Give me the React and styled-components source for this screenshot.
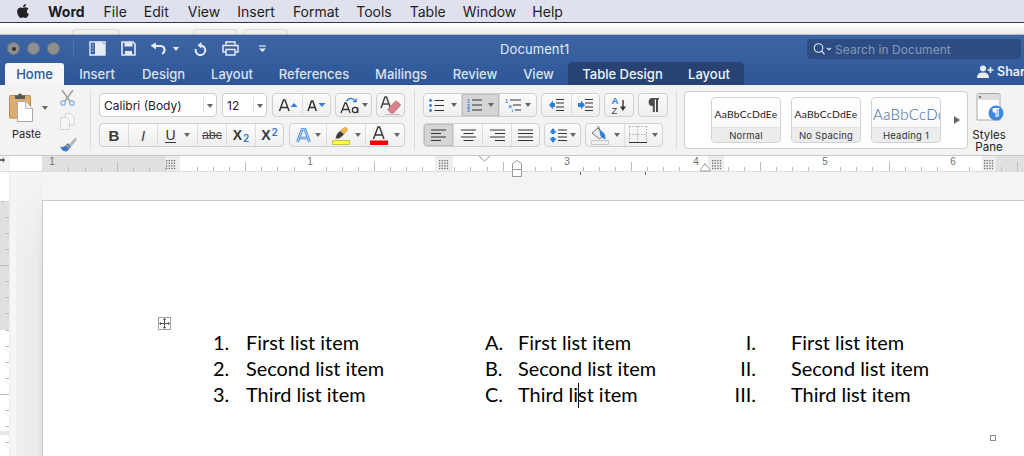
import React from "react";
import styled, { createGlobalStyle, css } from "styled-components";
import { FaApple } from "react-icons/fa";

const Global = createGlobalStyle`
  html, body { margin: 0; padding: 0; background: #f3f3f3; overflow: hidden; }
  #root { width: 1024px; height: 456px; overflow: hidden; }
  * { box-sizing: border-box; }
`;
const ui = `"Inter", "Liberation Sans", sans-serif`;

const Screen = styled.div`
  width: 1024px; height: 456px; display: flex; flex-direction: column; overflow: hidden;
  font-family: ${ui}; color: #222;
`;
const MenuBar = styled.div`
  height: 23px; flex: none; display: flex; align-items: center; padding: 0 0 0 15px;
  background: #dfe2ed; border-bottom: 1px solid #2f3650; font-size: 14px; color: #1d1d1f; white-space: nowrap;
`;
const MenuItem = styled.span`
  margin-left: ${(p) => p.$gap}px; font-weight: ${(p) => (p.$bold ? 700 : 400)};
`;
const BehindStrip = styled.div`
  height: 12px; flex: none; display: flex; align-items: flex-end; padding-left: 72px;
  background: linear-gradient(#ffffff, #ebebeb); border-bottom: 1px solid #b9bdc6;
`;
const GhostButton = styled.div`
  width: ${(p) => p.$w}px; height: 5px; margin-right: ${(p) => p.$mr || 0}px;
  border: 1px solid #d8d8d8; border-bottom: 0; border-radius: 4px 4px 0 0;
`;
const TitleBar = styled.div`
  height: 50px; flex: none; display: flex; flex-direction: column;
  background: linear-gradient(#3e65a3, #2e5597);
`;
const TitleRow = styled.div`
  height: 27px; flex: none; display: flex; align-items: center; padding-left: 7px; position: relative;
`;
const Light = styled.span`
  width: 13px; height: 13px; border-radius: 50%; margin-right: 7px; flex: none;
  background: #8f8f8f; border: 1px solid #6d7787; display: flex; align-items: center; justify-content: center;
  &::after { content: ""; width: 4px; height: 4px; border-radius: 50%; background: ${(p) => (p.$dot ? "#333" : "transparent")}; }
`;
const TitleSep = styled.span`
  width: 1px; height: 16px; background: #4f74ae; margin: 0 15px 0 6px; flex: none;
`;
const QuickIcon = styled.span`
  display: flex; flex: none; margin-right: ${(p) => p.$mr}px;
`;
const QuickCaret = styled.span`
  width: 0; height: 0; flex: none; border-left: 3px solid transparent; border-right: 3px solid transparent;
  border-top: 4px solid #e6ebf4;
`;
const DocTitle = styled.div`
  position: absolute; left: 500px; top: 6px; font-size: 13px; color: #e6ebf4; letter-spacing: .1px;
`;
const Search = styled.div`
  position: absolute; left: 807px; top: 4px; width: 214px; height: 20px; border-radius: 4px;
  background: #2d4d82; display: flex; align-items: center; padding-left: 6px; gap: 2px;
  font-size: 12px; color: #8599bd; letter-spacing: .05px;
`;
const TabRow = styled.div`
  height: 23px; flex: none; display: flex; align-items: flex-end; position: relative; padding-left: 5px;
`;
const Tab = styled.div`
  height: ${(p) => (p.$active ? 22 : 23)}px; flex: none; display: flex; align-items: center; justify-content: center;
  width: ${(p) => p.$w}px; font-size: 13px; font-weight: 500; color: #dbe3ef;
  white-space: nowrap;
  ${(p) => p.$active && css`background: #f6f6f6; color: #2b579a; border-radius: 3px 3px 0 0;`}
  ${(p) => p.$context && css`color: #f0f3f8;`}
`;
const ContextTabs = styled.div`
  display: flex; flex: none; background: #284373; border-radius: 5px 5px 0 0; padding-right: 3px;
`;
const Share = styled.div`
  position: absolute; left: 977px; top: 2px; display: flex; align-items: center; gap: 3px;
  font-size: 12.5px; font-weight: 600; color: #e8edf5; white-space: nowrap;
`;
const Ribbon = styled.div`
  height: 70px; flex: none; display: flex; background: #f3f3f3; position: relative;
`;
const ClipboardGroup = styled.div`
  width: 91px; flex: none; height: 60px; margin-top: 5px; border-right: 1px solid #dcdcdc;
  display: flex; position: relative;
`;
const PasteCol = styled.div`
  width: 58px; flex: none; display: flex; flex-direction: column; padding: 2px 0 0 9px; font-size: 11px; color: #222;
`;
const PasteLabel = styled.span`
  margin: 5px 0 0 3px;
`;
const PasteCaret = styled.span`
  position: absolute; left: 42px; top: 16px; width: 0; height: 0;
  border-left: 3px solid transparent; border-right: 3px solid transparent; border-top: 4px solid #666;
`;
const ClipTools = styled.div`
  display: flex; flex-direction: column; gap: 7px; padding-left: 2px;
`;
const FontGroup = styled.div`
  width: 324px; flex: none; height: 60px; margin-top: 5px; padding: 3px 0 0 8px; border-right: 1px solid #dcdcdc;
  display: flex; flex-direction: column; gap: 6px;
`;
const ParaGroup = styled(FontGroup)`
  width: 262px;
`;
const Row = styled.div`
  display: flex; height: 24px; gap: ${(p) => p.$gap ?? 4}px;
`;
const Select = styled.div`
  width: ${(p) => p.$w}px; height: 24px; flex: none; background: #fff; border: 1px solid #cfcfcf; border-radius: 4px;
  display: flex; align-items: center; padding-left: 4px; font-size: 12px; color: #222; position: relative;
  margin-right: 1px;
`;
const SelectCaret = styled.span`
  position: absolute; right: 0; top: 3px; bottom: 3px; width: 13px; border-left: 1px solid #e2e2e2;
  &::after { content: ""; position: absolute; left: 3px; top: 7px; width: 0; height: 0;
    border-left: 3px solid transparent; border-right: 3px solid transparent; border-top: 4px solid #666; }
`;
const Group = styled.div`
  display: flex; flex: none; height: 24px; border: 1px solid #d0d0d0; border-radius: 4px;
  background: linear-gradient(#fbfbfb, #efefef); overflow: hidden;
`;
const Cell = styled.div`
  width: ${(p) => p.$w}px; flex: none; height: 100%; display: flex; align-items: center; justify-content: center;
  position: relative; font-size: 13px; color: #333;
  & + & { border-left: 1px solid #dcdcdc; }
  ${(p) => p.$on && css`background: #d5d5d5; box-shadow: inset 0 0 0 1px #bdbdbd;`}
`;
const Caret = styled.span`
  width: 0; height: 0; flex: none; margin-left: ${(p) => p.$ml ?? 4}px;
  border-left: 3px solid transparent; border-right: 3px solid transparent; border-top: 4px solid #666;
`;
const Sub = styled.span`
  font-size: 10px; color: #2f74c9; font-weight: 600; margin-left: 1px; align-self: ${(p) => (p.$up ? "flex-start" : "flex-end")};
  margin-top: 2px; margin-bottom: 2px; line-height: 12px;
`;
const Bold = styled.span`
  font-weight: 700; font-size: 15px; color: #3a3a3a; font-family: "Liberation Sans", sans-serif;
`;
const ScriptX = styled.span`
  font-weight: 600; font-size: 14px; color: #3a3a3a; font-family: "Liberation Sans", sans-serif;
`;
const Ital = styled.span`
  font-style: italic; font-family: "Liberation Sans", sans-serif; font-size: 15px; color: #444;
`;
const Under = styled.span`
  font-size: 14px; font-family: "Liberation Sans", sans-serif; border-bottom: 1px solid #333; line-height: 14px;
`;
const Strike = styled.span`
  font-size: 12.5px; text-decoration: line-through; color: #444; font-family: "Liberation Sans", sans-serif;
`;
const StylesBox = styled.div`
  position: absolute; left: 684px; top: 6px; width: 284px; height: 58px; background: #fff;
  border: 1px solid #cfcfcf; border-radius: 4px; display: flex; padding: 5px 0 0 26px; gap: 10px;
`;
const StyleCard = styled.div`
  width: 70px; height: 46px; flex: none; border: 1px solid #d2d2d2; border-radius: 4px; overflow: hidden;
  display: flex; flex-direction: column; background: linear-gradient(#fff, #f7f7f7);
`;
const StylePreview = styled.div`
  flex: 1; display: flex; align-items: center; padding-top: 2px; overflow: hidden; white-space: nowrap;
  font-family: "Lato", sans-serif; font-size: ${(p) => (p.$heading ? 15 : 10.3)}px; color: ${(p) => (p.$heading ? "#3f65a5" : "#222")};
  font-weight: ${(p) => (p.$heading ? 300 : 400)};
  justify-content: ${(p) => (p.$heading ? "flex-start" : "center")}; padding-left: ${(p) => (p.$heading ? 1 : 0)}px;
  letter-spacing: ${(p) => (p.$heading ? 0.3 : 0.25)}px;
`;
const StyleName = styled.div`
  height: 15px; flex: none; background: #ececec; border-top: 1px solid #e4e4e4; text-align: center;
  font-size: 9.5px; line-height: 15px; color: #333; letter-spacing: .2px;
`;
const StylesArrow = styled.span`
  position: absolute; left: 269px; top: 24px; width: 0; height: 0;
  border-top: 4px solid transparent; border-bottom: 4px solid transparent; border-left: 6px solid #666;
`;
const PaneButton = styled.div`
  position: absolute; left: 970px; top: 8px; width: 38px; display: flex; flex-direction: column; align-items: center;
  font-size: 11.5px; line-height: 12px; color: #222;
`;
const PaneIcon = styled.span`
  display: flex; margin-bottom: 6px; margin-left: 3px;
`;
const RulerBar = styled.div`
  height: 17px; flex: none; display: flex; position: relative; z-index: 1;
`;
const Workspace = styled.div`
  flex: 1; display: flex; min-height: 0; background: #f4f4f4;
`;
const VRuler = styled.div`
  width: 10px; flex: none; display: flex;
`;
const Canvas = styled.div`
  flex: 1; padding: 28px 0 0 32px; min-width: 0; overflow: hidden;
  background:
    linear-gradient(180deg, #f4f4f4 0, rgba(244, 244, 244, 0) 90px),
    linear-gradient(90deg, #f6f6f6 0, #f6f6f6 6px, #efefef 6px, #ebebeb 26px, #e2e2e2 32px, #f4f4f4 32px);
`;
const Page = styled.div`
  height: 300px; background: #fff; border: 1px solid #cbcbcb; border-right: 0; border-bottom: 0;
  position: relative; padding: 128px 0 0 170px;
`;
const MoveHandle = styled.span`
  position: absolute; left: 115px; top: 116px; width: 13px; height: 13px; border: 1px solid #a0a0a0; background: #fff;
  display: flex;
`;
const ResizeHandle = styled.span`
  position: absolute; left: 947px; top: 234px; width: 6px; height: 6px; border: 1px solid #8c8c8c; background: #fff;
`;
const TableGrid = styled.div`
  display: grid; grid-template-columns: 272px 239px 1fr;
  font-family: "Lato", "Carlito", sans-serif; font-size: 19.9px; color: #000; line-height: 26px;
`;
const ListCol = styled.div`
  display: flex; flex-direction: column;
`;
const ListRow = styled.div`
  display: flex; white-space: nowrap; height: 26px;
`;
const Marker = styled.span`
  flex: none; width: ${(p) => p.$w}px; text-align: ${(p) => (p.$right ? "right" : "left")};
  padding-right: ${(p) => (p.$right ? 35 : 0)}px;
`;
const TextCaret = styled.span`
  position: relative; display: inline-block; width: 0; height: 0;
  &::after { content: ""; position: absolute; left: 0; top: -19px; width: 1px; height: 25px; background: #111; }
`;

const S = { fill: "none", stroke: "currentColor" };

const Ic = styled.svg`
  display: block; flex: none; color: ${(p) => p.$c || "inherit"}; overflow: ${(p) => (p.$over ? "visible" : "hidden")};
`;

const Sidebar = () => (
  <Ic $c="#e6ebf4" width="17" height="15" viewBox="0 0 17 15">
    <path d="M1 1h15v13H1z" {...S} strokeWidth="1.4" />
    <path d="M6 1h7l3 3v10H6z" fill="currentColor" />
    <path d="M3 4h1.5M3 7h1.5M3 10h1.5" {...S} />
  </Ic>
);
const Save = () => (
  <Ic $c="#e6ebf4" width="15" height="15" viewBox="0 0 15 15">
    <path d="M1 1h11l2 2v11H1z" {...S} strokeWidth="1.6" />
    <path d="M3.5 1.500h8v4h-8z" fill="currentColor" />
    <path d="M4 10h7v4H4z" fill="currentColor" />
  </Ic>
);
const Undo = () => (
  <Ic $c="#e6ebf4" width="17" height="13" viewBox="0 0 17 13">
    <path d="M0.500 3.500L6 .5v7z" fill="currentColor" />
    <path d="M5 4h6a4 4 0 0 1 1 7.700" {...S} strokeWidth="2" />
  </Ic>
);
const Redo = () => (
  <Ic $c="#e6ebf4" width="13" height="14" viewBox="0 0 13 14">
    <path d="M7 3.500A4.800 4.800 0 1 1 1.800 7" {...S} strokeWidth="2" />
    <path d="M7.500 0v6.500L3.500 3.200z" fill="currentColor" />
  </Ic>
);
const Print = () => (
  <Ic $c="#e6ebf4" width="17" height="15" viewBox="0 0 17 15">
    <path d="M4 4V1h9v3" {...S} strokeWidth="1.4" />
    <path d="M4 11H1V4.500h15V11h-3" {...S} strokeWidth="1.5" />
    <path d="M4 8.500h9v5.500H4z" {...S} strokeWidth="1.4" />
  </Ic>
);
const More = () => (
  <Ic $c="#e6ebf4" width="9" height="8" viewBox="0 0 9 8">
    <path d="M1 1h7" {...S} strokeWidth="1.2" />
    <path d="M1 3.500h7L4.500 7z" fill="currentColor" />
  </Ic>
);
const Magnifier = () => (
  <Ic $c="#dfe6f1" width="20" height="12" viewBox="0 0 20 12">
    <circle cx="5.500" cy="5" r="4.300" {...S} strokeWidth="1.1" />
    <path d="M8.500 8l3 3.300" {...S} strokeWidth="1.2" />
    <path d="M14 5l2 1.800L18 5" {...S} strokeWidth="1.2" />
  </Ic>
);
const AddUser = () => (
  <Ic $c="#e8edf5" width="17" height="13" viewBox="0 0 17 13">
    <circle cx="6" cy="3.500" r="3" fill="currentColor" />
    <path d="M0 13c0-4 2-5.500 6-5.500s6 1.500 6 5.500z" fill="currentColor" />
    <path d="M13.500 2v6M10.500 5h6" {...S} strokeWidth="1.6" />
  </Ic>
);
const Clipboard = () => (
  <Ic width="25" height="30" viewBox="0 0 25 30">
    <path d="M1.500 3.500h19a1 1 0 0 1 1 1V26H1a.5.5 0 0 1-.5-.5V4.500a1 1 0 0 1 1-1z" fill="#dcae71" stroke="#b88a4d" />
    <path d="M6 3.500h3a2 2 0 0 1 4 0h3V7H6z" fill="#595959" />
    <path d="M8.500 9.500h8l7 7V29.500h-15z" fill="#fff" stroke="#a8a8a8" />
    <path d="M16.500 9.500v7h7" fill="#f0f0f0" stroke="#bdbdbd" />
  </Ic>
);
const Scissors = () => (
  <Ic width="15" height="16" viewBox="0 0 15 16">
    <path d="M2 0l8.500 12M13 0L4.500 12" stroke="#9aa0a6" strokeWidth="1.500" fill="none" />
    <circle cx="3" cy="13" r="2.200" fill="none" stroke="#8fb2dc" strokeWidth="1.300" />
    <circle cx="12" cy="13" r="2.200" fill="none" stroke="#8fb2dc" strokeWidth="1.300" />
  </Ic>
);
const Copy = () => (
  <Ic width="15" height="17" viewBox="0 0 15 17">
    <path d="M5.500.5h5l3.500 3.500v8H5.500z" fill="#f7f7f7" stroke="#d4d4d4" />
    <path d="M.5 4.500h6l3 3v9h-9z" fill="#f7f7f7" stroke="#d4d4d4" />
  </Ic>
);
const Brush = () => (
  <Ic width="17" height="15" viewBox="0 0 17 15">
    <path d="M10 7l5-5.500a1 1 0 0 1 1.300 1.300L11.500 8.500z" fill="#bcbcbc" stroke="#8d8d8d" strokeWidth=".6" />
    <path d="M0 9.500c3 1.500 6-.5 7.500-3.500L11 9c-1 2-3 5.500-5.500 5.500C3 14.500 1 12 0 9.500z" fill="#3a79c4" />
    <path d="M6 7.500l3 3" stroke="#e0a657" strokeWidth="1.600" />
  </Ic>
);
const GrowA = ({ up }) => (
  <Ic width="20" height="13" viewBox="0 0 20 13">
    <path d={up ? "M1.500 12L5.500 1h1.500l4 11M3 8.500h7" : "M1 12L4.500 2h1.300L9.300 12M2.500 8.500h6"} fill="none" stroke="#333" strokeWidth="1.500" />
    {up ? <path d="M12.500 8l3.500-4 3.500 4z" fill="#2f7ed8" /> : <path d="M11.500 4h7l-3.500 4z" fill="#2f7ed8" />}
  </Ic>
);
const ChangeCase = () => (
  <Ic width="19" height="17" viewBox="0 0 19 17">
    <path d="M1 16L5 6h1.200l4 10M2.500 12.500h6" fill="none" stroke="#333" strokeWidth="1.300" />
    <path d="M6.500 4c2-3 5-3.500 8-1" fill="none" stroke="#2f7ed8" strokeWidth="1.500" />
    <path d="M17 1l-.5 4.500-4-.5z" fill="#2f7ed8" />
    <circle cx="15" cy="13" r="2.600" fill="none" stroke="#333" strokeWidth="1.300" />
    <path d="M17.800 10.500V16" stroke="#333" strokeWidth="1.200" />
  </Ic>
);
const Eraser = () => (
  <Ic width="21" height="22" viewBox="0 0 21 22">
    <path d="M1 14L5 3h1.500l4 11M2.500 10h6" fill="none" stroke="#444" strokeWidth="1.500" />
    <path d="M7.500 15.500L15 7.500a1.500 1.500 0 0 1 2 0l3 2.500a1.500 1.500 0 0 1 0 2l-6.500 7h-3z" fill="#d8828f" stroke="#aa5c6a" strokeWidth=".6" />
    <path d="M5 20.500h15" stroke="#bbb" strokeWidth="1" />
  </Ic>
);
const Lines = ({ d }) => <path d={d} fill="none" stroke="#333" strokeWidth="1.100" />;
const Bullets = () => (
  <Ic width="16" height="13" viewBox="0 0 16 13">
    <circle cx="1.500" cy="1.500" r="1.400" fill="#2f7ed8" /><circle cx="1.500" cy="6.500" r="1.400" fill="#2f7ed8" /><circle cx="1.500" cy="11.500" r="1.400" fill="#2f7ed8" />
    <Lines d="M5.500 1.500H15M5.500 6.500H15M5.500 11.500H15" />
  </Ic>
);
const Numbers = () => (
  <Ic width="16" height="14" viewBox="0 0 16 14">
    <text x="0" y="4.500" fontSize="5" fontWeight="700" fill="#2f7ed8" fontFamily="Liberation Sans">1</text>
    <text x="0" y="9.500" fontSize="5" fontWeight="700" fill="#2f7ed8" fontFamily="Liberation Sans">2</text>
    <text x="0" y="14" fontSize="5" fontWeight="700" fill="#2f7ed8" fontFamily="Liberation Sans">3</text>
    <Lines d="M5 2h10M5 7h10M5 12h10" />
  </Ic>
);
const Multi = () => (
  <Ic width="17" height="14" viewBox="0 0 17 14">
    <text x="0" y="5" fontSize="5.500" fontWeight="700" fill="#2f7ed8" fontFamily="Liberation Sans">1</text>
    <text x="3.500" y="10" fontSize="5.500" fontWeight="700" fill="#2f7ed8" fontFamily="Liberation Sans">a</text>
    <text x="6.500" y="14.500" fontSize="5.500" fontWeight="700" fill="#2f7ed8" fontFamily="Liberation Sans">i</text>
    <Lines d="M5 2h11M8 7h8M10 12h6" />
  </Ic>
);
const Indent = ({ right }) => (
  <Ic width="17" height="12" viewBox="0 0 17 12">
    <Lines d="M8 .5h8M8 4h8M8 8h8M8 11.500h8" />
    {right
      ? <path d="M1 4h3V1.500L8 6l-4 4.500V8H1z" fill="#2f7ed8" />
      : <path d="M7 4H5V1.500L1 6l4 4.500V8h2z" fill="#2f7ed8" />}
  </Ic>
);
const Sort = () => (
  <Ic width="16" height="20" viewBox="0 0 16 20">
    <text x="0.500" y="8.500" fontSize="9.500" fill="#2f7ed8" fontWeight="600" fontFamily="Liberation Sans">A</text>
    <text x="0.500" y="19" fontSize="9.500" fill="#444" fontFamily="Liberation Sans">Z</text>
    <path d="M12 5v9" stroke="#333" strokeWidth="1.400" />
    <path d="M9 11.500h6L12 16z" fill="#333" />
  </Ic>
);
const Pilcrow = () => (
  <Ic width="12" height="14" viewBox="0 0 12 14">
    <path d="M5.500 0H12v1.500h-1V14H9V1.500H7.800V14H5.800V8A4 4 0 0 1 5.500 0z" fill="#4a4a4a" />
  </Ic>
);
const TextEffect = () => (
  <Ic width="15" height="15" viewBox="0 0 15 15">
    <path d="M1.500 14L6 1.500h3L13.500 14M3.800 10h7.400" fill="none" stroke="#2f7ed8" strokeWidth="2.600" />
    <path d="M1.500 14L6 1.500h3L13.500 14M3.800 10h7.400" fill="none" stroke="#fff" strokeWidth=".8" />
  </Ic>
);
const Highlighter = () => (
  <Ic width="18" height="19" viewBox="0 0 18 19">
    <path d="M8 5l5-4 3 2.500-4 5z" fill="#f0b44a" stroke="#c88f2b" strokeWidth=".5" />
    <path d="M5 8l3-3 4 3.500-3 2.500-2 1.500H3.500z" fill="#3c3c3c" />
    <path d="M.5 14.500h17v4H.5z" fill="#ffff3c" stroke="#c4c440" />
  </Ic>
);
const FontColor = () => (
  <Ic width="18" height="19" viewBox="0 0 18 19">
    <path d="M3.500 13L8 1h1.500L14 13M5.500 9h6.500" fill="none" stroke="#333" strokeWidth="1.400" />
    <path d="M0 14.500h18V19H0z" fill="#f30000" />
  </Ic>
);
const Align = ({ kind }) => {
  const m = {
    left: "M1 1h15M1 4.500h10M1 8h15M1 11.500h10",
    center: "M1 1h15M3.500 4.500h10M1 8h15M3.500 11.500h10",
    right: "M1 1h15M6 4.500h10M1 8h15M6 11.500h10",
    just: "M1 1h15M1 4.500h15M1 8h15M1 11.500h15",
  };
  return <Ic width="17" height="13" viewBox="0 0 17 13"><Lines d={m[kind]} /></Ic>;
};
const Spacing = () => (
  <Ic width="18" height="15" viewBox="0 0 18 15">
    <path d="M4 0L7.500 4.500h-2v1.500h-3V4.500h-2z" fill="#2f7ed8" />
    <path d="M4 15L7.500 10.500h-2V9h-3v1.500h-2z" fill="#2f7ed8" />
    <Lines d="M9 2h9M9 5.500h9M9 9h9M9 12.500h9" />
  </Ic>
);
const Bucket = () => (
  <Ic width="18" height="19" viewBox="0 0 18 19">
    <path d="M1 7l6-5 6.500 6-5 5z" fill="#eee" stroke="#777" />
    <path d="M6 1c1-1 2-.5 2.500 3" fill="none" stroke="#555" />
    <path d="M8 3l6 6 .5 4c-2 0-4-2-5-3z" fill="#2f7ed8" />
    <path d="M.5 14.500h17v4H.5z" fill="#efefef" stroke="#c4c4c4" />
  </Ic>
);
const Borders = () => (
  <Ic width="18" height="18" viewBox="0 0 18 18">
    <path d="M.5 .5h17M.5 8.500h17M.5 .5v16M8.500 .5v16M17.500 .5v16" fill="none" stroke="#888" strokeDasharray="1 2" />
    <path d="M0 16.500h18" stroke="#333" strokeWidth="1.200" />
  </Ic>
);
const Pane = () => (
  <Ic width="30" height="30" viewBox="0 0 30 30">
    <path d="M2.500 .5h20a1.500 1.500 0 0 1 1.500 1.500v25H1V2a1.500 1.500 0 0 1 1.500-1.500z" fill="#fff" stroke="#a9a9a9" />
    <path d="M1.500 1h22v6h-22z" fill="#dddddd" />
    <circle cx="4" cy="4" r="1" fill="#555" />
    <circle cx="20" cy="20" r="7.500" fill="#3f86e0" />
    <path d="M18 15h5.500v1h-.8v8h-1.200v-8h-.8v8H19.500v-4.500a2.300 2.300 0 0 1-1.500-4.500z" fill="#fff" />
  </Ic>
);
const MoveGlyph = () => (
  <Ic width="11" height="11" viewBox="0 0 11 11">
    <path d="M5.500 1v9M1 5.500h9" stroke="#444" strokeWidth=".9" fill="none" />
    <path d="M5.500 0L7 2H4zM5.500 11L4 9h3zM0 5.500L2 4v3zM11 5.500L9 7V4z" fill="#444" />
  </Ic>
);

const ticks = [];
for (let k = -8; k <= 52; k++) ticks.push(k);

const Dots = ({ cx }) => {
  const out = [];
  for (let i = 0; i < 4; i++) for (let j = 0; j < 4; j++)
    out.push(<rect key={`${i}-${j}`} x={cx - 4 + i * 2.6} y={5 + j * 2.6} width="1.300" height="1.300" fill="#6a6a6a" />);
  return <g>{out}</g>;
};

const Ruler = () => (
  <Ic $over width="1024" height="17" viewBox="0 0 1024 17">
    <rect width="1024" height="17" fill="#ffffff" />
    <rect x="0" width="10" height="17" fill="#f3f3f3" />
    <rect x="42" width="123" height="17" fill="#e0e0e0" />
    <rect x="165" width="15" height="17" fill="#ededed" />
    <rect x="435" width="18" height="17" fill="#ededed" />
    <rect x="708" width="16" height="17" fill="#ededed" />
    <rect x="982" width="14" height="17" fill="#ededed" />
    <rect x="996" width="28" height="17" fill="#e0e0e0" />
    {ticks.map((k) => {
      const x = 181 + k * 16.08;
      if (k % 8 === 0) return null;
      const tall = k % 4 === 0;
      if (x < 42 || (x > 165 && x < 180) || (x > 435 && x < 453) || (x > 708 && x < 724) || (x > 982 && x < 996)) return null;
      return <rect key={k} x={Math.round(x)} y={tall ? 7 : 12} width="1" height={tall ? 9 : 4} fill="#bcbcbc" />;
    })}
    {[[52, "1"], [310, "1"], [567, "3"], [696, "4"], [825, "5"], [953, "6"]].map(([x, t]) => (
      <text key={x} x={x} y="10" textAnchor="middle" fontSize="10" fill="#707070" fontFamily="Liberation Sans">{t}</text>
    ))}
    <Dots cx={170} /><Dots cx={443} /><Dots cx={716} /><Dots cx={988} />
    <path d="M0 4h3V2l2 3-2 3V6H0z" fill="#666" />
    <rect x="0" y="16" width="1024" height="1" fill="#dcdcdc" />
    <rect x="0" y="0" width="1024" height="1" fill="#c9c9c9" />
    <path d="M479 1l5.500 5 5.500-5" fill="#fff" stroke="#999" />
    <path d="M512.500 21.500v-13l4.500-3 4.500 3v13z" fill="#fff" stroke="#999" />
    <path d="M512.500 14.500h9" stroke="#999" />
    <path d="M700.500 16c0-3 2-3 4.500-7.500 2.500 4.500 5 4.500 5 7.500z" fill="#fff" stroke="#999" />
    <rect x="580" y="17" width="1" height="3" fill="#666" />
    <rect x="645" y="17" width="1" height="3" fill="#666" />
  </Ic>
);

const VRulerDraw = () => {
  const t = [];
  for (let i = 0; i < 15; i++) t.push(45 + i * 16.08);
  return (
    <Ic width="10" height="284" viewBox="0 0 10 284">
      <rect width="10" height="284" fill="#fff" />
      <rect y="29" width="9" height="129" fill="#e0e0e0" />
      {t.map((y, i) => (i === 3 || i === 11
        ? <rect key={i} x="0" y={Math.round(y)} width="9" height="1" fill="#bcbcbc" />
        : <rect key={i} x="5" y={Math.round(y)} width="4" height="1" fill="#bcbcbc" />))}
      <rect y="259" width="10" height="4" fill="#e6e6e6" />
      <rect x="9" width="1" height="284" fill="#ececec" />
      <rect x="2" y="29" width="1" height="1" fill="#b0708a" />
    </Ic>
  );
};

const rows = ["First list item", "Second list item"];

const List = ({ markers, w, right, caret }) => (
  <ListCol>
    {markers.map((m, i) => (
      <ListRow key={m}>
        <Marker $w={w} $right={right}>{m}</Marker>
        {i < 2 ? <span>{rows[i]}</span> : caret ? <span>Third li<TextCaret />st item</span> : <span>Third list item</span>}
      </ListRow>
    ))}
  </ListCol>
);

export default function App() {
  return (
    <Screen>
      <Global />
      <MenuBar>
        <FaApple size={16} color="#222" />
        <MenuItem $gap={17} $bold>Word</MenuItem>
        <MenuItem $gap={19}>File</MenuItem>
        <MenuItem $gap={17}>Edit</MenuItem>
        <MenuItem $gap={19}>View</MenuItem>
        <MenuItem $gap={17}>Insert</MenuItem>
        <MenuItem $gap={18}>Format</MenuItem>
        <MenuItem $gap={17}>Tools</MenuItem>
        <MenuItem $gap={18}>Table</MenuItem>
        <MenuItem $gap={17}>Window</MenuItem>
        <MenuItem $gap={16}>Help</MenuItem>
      </MenuBar>
      <BehindStrip>
        <GhostButton $w={48} $mr={73} />
        <GhostButton $w={44} $mr={7} />
        <GhostButton $w={44} />
      </BehindStrip>
      <TitleBar>
        <TitleRow>
          <Light $dot /><Light /><Light />
          <TitleSep />
          <QuickIcon $mr={15}><Sidebar /></QuickIcon>
          <QuickIcon $mr={14}><Save /></QuickIcon>
          <QuickIcon $mr={6}><Undo /></QuickIcon>
          <QuickIcon $mr={15}><QuickCaret /></QuickIcon>
          <QuickIcon $mr={15}><Redo /></QuickIcon>
          <QuickIcon $mr={19}><Print /></QuickIcon>
          <QuickIcon $mr={0}><More /></QuickIcon>
          <DocTitle>Document1</DocTitle>
          <Search><Magnifier /><span>Search in Document</span></Search>
        </TitleRow>
        <TabRow>
          <Tab $active $w={59}>Home</Tab>
          <Tab $w={66}>Insert</Tab>
          <Tab $w={67}>Design</Tab>
          <Tab $w={70}>Layout</Tab>
          <Tab $w={94}>References</Tab>
          <Tab $w={80}>Mailings</Tab>
          <Tab $w={68}>Review</Tab>
          <Tab $w={59}>View</Tab>
          <ContextTabs>
            <Tab $context $w={109}>Table Design</Tab>
            <Tab $context $w={64}>Layout</Tab>
          </ContextTabs>
          <Share><AddUser />Share</Share>
        </TabRow>
      </TitleBar>
      <Ribbon>
        <ClipboardGroup>
          <PasteCol>
            <Clipboard />
            <PasteLabel>Paste</PasteLabel>
            <PasteCaret />
          </PasteCol>
          <ClipTools>
            <Scissors /><Copy /><Brush />
          </ClipTools>
        </ClipboardGroup>
        <FontGroup>
          <Row>
            <Select $w={118}>Calibri (Body)<SelectCaret /></Select>
            <Select $w={45}>12<SelectCaret /></Select>
            <Group>
              <Cell $w={29}><GrowA up /></Cell>
              <Cell $w={28}><GrowA /></Cell>
            </Group>
            <Group><Cell $w={35}><ChangeCase /><Caret $ml={3} /></Cell></Group>
            <Group><Cell $w={27}><Eraser /></Cell></Group>
          </Row>
          <Row $gap={5}>
            <Group>
              <Cell $w={28}><Bold>B</Bold></Cell>
              <Cell $w={29}><Ital>I</Ital></Cell>
              <Cell $w={40}><Under>U</Under><Caret $ml={8} /></Cell>
              <Cell $w={29}><Strike>abc</Strike></Cell>
              <Cell $w={29}><ScriptX>X</ScriptX><Sub>2</Sub></Cell>
              <Cell $w={28}><ScriptX>X</ScriptX><Sub $up>2</Sub></Cell>
            </Group>
            <Group>
              <Cell $w={36}><TextEffect /><Caret /></Cell>
              <Cell $w={39}><Highlighter /><Caret $ml={5} /></Cell>
              <Cell $w={39}><FontColor /><Caret $ml={6} /></Cell>
            </Group>
          </Row>
        </FontGroup>
        <ParaGroup>
          <Row>
            <Group>
              <Cell $w={37}><Bullets /><Caret $ml={6} /></Cell>
              <Cell $w={38} $on><Numbers /><Caret $ml={5} /></Cell>
              <Cell $w={37}><Multi /><Caret $ml={3} /></Cell>
            </Group>
            <Group>
              <Cell $w={29}><Indent /></Cell>
              <Cell $w={28}><Indent right /></Cell>
            </Group>
            <Group><Cell $w={28}><Sort /></Cell></Group>
            <Group><Cell $w={28}><Pilcrow /></Cell></Group>
          </Row>
          <Row>
            <Group>
              <Cell $w={29} $on><Align kind="left" /></Cell>
              <Cell $w={29}><Align kind="center" /></Cell>
              <Cell $w={29}><Align kind="right" /></Cell>
              <Cell $w={28}><Align kind="just" /></Cell>
            </Group>
            <Group><Cell $w={35}><Spacing /><Caret $ml={3} /></Cell></Group>
            <Group>
              <Cell $w={38}><Bucket /><Caret $ml={5} /></Cell>
              <Cell $w={38}><Borders /><Caret $ml={5} /></Cell>
            </Group>
          </Row>
        </ParaGroup>
        <StylesBox>
          <StyleCard><StylePreview>AaBbCcDdEe</StylePreview><StyleName>Normal</StyleName></StyleCard>
          <StyleCard><StylePreview>AaBbCcDdEe</StylePreview><StyleName>No Spacing</StyleName></StyleCard>
          <StyleCard><StylePreview $heading>AaBbCcDc</StylePreview><StyleName>Heading 1</StyleName></StyleCard>
          <StylesArrow />
        </StylesBox>
        <PaneButton>
          <PaneIcon><Pane /></PaneIcon>
          <span>Styles</span>
          <span>Pane</span>
        </PaneButton>
      </Ribbon>
      <RulerBar><Ruler /></RulerBar>
      <Workspace>
        <VRuler><VRulerDraw /></VRuler>
        <Canvas>
          <Page>
            <MoveHandle><MoveGlyph /></MoveHandle>
            <TableGrid>
              <List markers={["1.", "2.", "3."]} w={33} />
              <List markers={["A.", "B.", "C."]} w={33} caret />
              <List markers={["I.", "II.", "III."]} w={67} right />
            </TableGrid>
            <ResizeHandle />
          </Page>
        </Canvas>
      </Workspace>
    </Screen>
  );
}
